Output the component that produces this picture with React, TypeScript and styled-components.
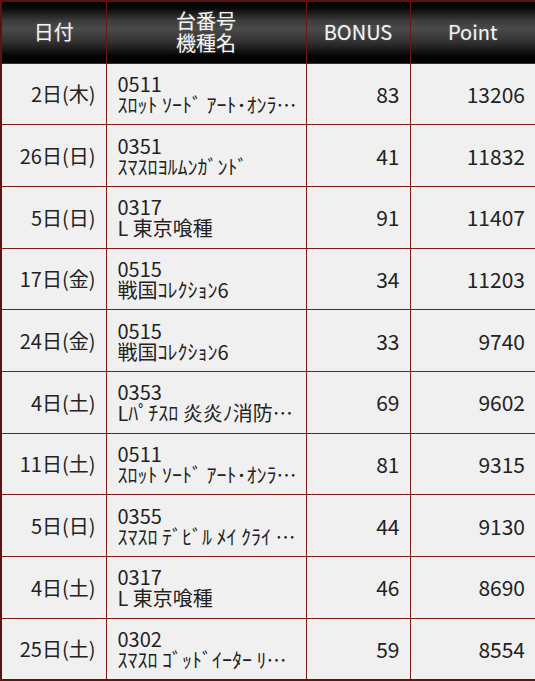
import React from "react";
import styled, { createGlobalStyle } from "styled-components";

const GlobalStyle = createGlobalStyle`
	html, body {
		margin: 0;
		padding: 0;
		background: #ffffff;
	}
	body {
		font-family: "Noto Sans CJK JP", "Noto Sans", sans-serif;
	}
`;

interface Entry {
	date: string;
	code: string;
	name: string;
	bonus: number;
	point: number;
}

const entries: Entry[] = [
	{ date: "2日(木)", code: "0511", name: "ｽﾛｯﾄ ｿｰﾄﾞ ｱｰﾄ･ｵﾝﾗ…", bonus: 83, point: 13206 },
	{ date: "26日(日)", code: "0351", name: "ｽﾏｽﾛﾖﾙﾑﾝｶﾞﾝﾄﾞ", bonus: 41, point: 11832 },
	{ date: "5日(日)", code: "0317", name: "L 東京喰種", bonus: 91, point: 11407 },
	{ date: "17日(金)", code: "0515", name: "戦国ｺﾚｸｼｮﾝ6", bonus: 34, point: 11203 },
	{ date: "24日(金)", code: "0515", name: "戦国ｺﾚｸｼｮﾝ6", bonus: 33, point: 9740 },
	{ date: "4日(土)", code: "0353", name: "Lﾊﾟﾁｽﾛ 炎炎ﾉ消防…", bonus: 69, point: 9602 },
	{ date: "11日(土)", code: "0511", name: "ｽﾛｯﾄ ｿｰﾄﾞ ｱｰﾄ･ｵﾝﾗ…", bonus: 81, point: 9315 },
	{ date: "5日(日)", code: "0355", name: "ｽﾏｽﾛ ﾃﾞﾋﾞﾙ ﾒｲ ｸﾗｲ …", bonus: 44, point: 9130 },
	{ date: "4日(土)", code: "0317", name: "L 東京喰種", bonus: 46, point: 8690 },
	{ date: "25日(土)", code: "0302", name: "ｽﾏｽﾛ ｺﾞｯﾄﾞｲｰﾀｰ ﾘ…", bonus: 59, point: 8554 }
];

const Table = styled.table`
	width: 535px;
	border-collapse: collapse;
	table-layout: fixed;
	border: 2px solid #5e1313;
	font-size: 20px;
	color: #222222;
`;

const HeadRow = styled.tr`
	height: 62px;
	background: linear-gradient(
		to bottom,
		#000000 0%,
		#0a0a0a 12%,
		#3c3c3c 32%,
		#4a4a4a 45%,
		#2e2e2e 68%,
		#050505 88%,
		#000000 100%
	);
`;

const HeadCell = styled.th`
	border: 1px solid #6e1616;
	color: #f4f4f4;
	font-weight: 400;
	font-size: 20px;
	line-height: 22px;
	text-align: center;
	vertical-align: middle;
	padding: 0;
	text-shadow: 0 0 2px rgba(255, 255, 255, 0.25);
`;

const Row = styled.tr`
	height: 61.7px;
	background: #f1f0f0;
`;

const Cell = styled.td<{ $align: "left" | "right" }>`
	border: 1px solid #7d1a1a;
	padding: ${(p) => (p.$align === "right" ? "0 10px 0 0" : "0 0 0 11px")};
	text-align: ${(p) => p.$align};
	vertical-align: middle;
	white-space: nowrap;
	overflow: hidden;
`;

const DateText = styled.span`
	font-size: 20px;
`;

const Machine = styled.div`
	display: flex;
	flex-direction: column;
	line-height: 21px;
`;

const Code = styled.span`
	font-size: 20px;
`;

const Name = styled.span`
	font-size: 20px;
`;

const Num = styled.span`
	font-size: 21px;
`;

const App = () => (
	<>
		<GlobalStyle />
		<Table>
			<colgroup>
				<col style={{ width: 105 }} />
				<col style={{ width: 200 }} />
				<col style={{ width: 104 }} />
				<col style={{ width: 126 }} />
			</colgroup>
			<thead>
				<HeadRow>
					<HeadCell>日付</HeadCell>
					<HeadCell>
						台番号
						<br />
						機種名
					</HeadCell>
					<HeadCell>BONUS</HeadCell>
					<HeadCell>Point</HeadCell>
				</HeadRow>
			</thead>
			<tbody>
				{entries.map((e, i) => (
					<Row key={i}>
						<Cell $align="right">
							<DateText>{e.date}</DateText>
						</Cell>
						<Cell $align="left">
							<Machine>
								<Code>{e.code}</Code>
								<Name>{e.name}</Name>
							</Machine>
						</Cell>
						<Cell $align="right">
							<Num>{e.bonus}</Num>
						</Cell>
						<Cell $align="right">
							<Num>{e.point}</Num>
						</Cell>
					</Row>
				))}
			</tbody>
		</Table>
	</>
);

export default App;
